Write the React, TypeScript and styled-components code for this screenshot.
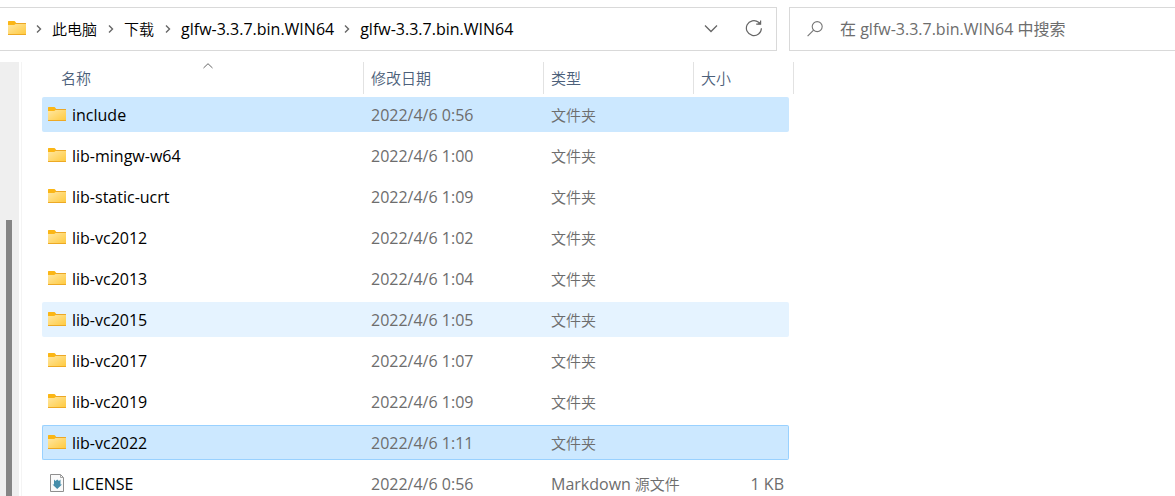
import React from "react";
import styled, { createGlobalStyle } from "styled-components";

const GlobalStyle = createGlobalStyle`
  * { box-sizing: border-box; }
  body {
    margin: 0;
    background: #fff;
    color: #000;
    font: 16px/20px "Open Sans", "Noto Sans CJK SC", sans-serif;
    overflow: hidden;
  }
  button, input { font: inherit; color: inherit; }
  svg { display: block; flex: none; }
`;

const Window = styled.div`
  display: flex;
  flex-direction: column;
  gap: 11px;
  height: 100vh;
  padding-top: 7px;
  overflow: hidden;
`;

const Toolbar = styled.header`
  display: flex;
  flex: none;
  gap: 12px;
`;

const AddressBar = styled.div`
  display: flex;
  align-items: center;
  flex: 1;
  min-width: 0;
  height: 44px;
  padding: 0 8px;
  border: 1px solid #d9d9d9;
  border-left: 0;
`;

const Crumbs = styled.nav`
  display: flex;
  align-items: center;
  flex: 1;
  min-width: 0;
  white-space: nowrap;
`;

const Crumb = styled.a<{ $cjk?: boolean }>`
  padding-right: ${(p) => (p.$cjk ? 1 : 0)}px;
  color: #000;
  font-size: ${(p) => (p.$cjk ? 15 : 16)}px;
  font-weight: ${(p) => (p.$cjk ? 350 : 400)};
  text-decoration: none;
`;

const Slot = styled.span`
  display: flex;
  justify-content: center;
  width: 26px;
`;

const IconButton = styled.button`
  display: grid;
  place-items: center;
  width: 28px;
  height: 32px;
  padding: 0;
  border: 0;
  background: none;
  color: #666;
  & + & { margin-left: 15px; }
`;

const SearchBox = styled.label`
  display: flex;
  align-items: center;
  gap: 17px;
  width: 386px;
  height: 44px;
  padding-left: 17px;
  border: 1px solid #d9d9d9;
  border-right: 0;
`;

const SearchInput = styled.input`
  flex: 1;
  min-width: 0;
  padding: 0;
  border: 0;
  outline: 0;
  background: none;
  &::placeholder { color: #6d6d6d; opacity: 1; }
`;

const Body = styled.div`
  display: flex;
  flex: 1;
  min-height: 0;
`;

const ScrollTrack = styled.div`
  display: flex;
  flex: none;
  width: 19px;
  padding: 158px 7px 0 6px;
  background: #efefef;
`;

const ScrollThumb = styled.div`
  flex: 1;
  background: #858585;
`;

const ListPane = styled.main`
  flex: 1;
  min-width: 0;
  margin-left: 2px;
  padding-left: 20px;
  border-left: 1px solid #f4f4f4;
  overflow: hidden;
`;

const FileTable = styled.table`
  width: 752px;
  table-layout: fixed;
  border-collapse: separate;
  border-spacing: 0;
`;

const HeadCell = styled.th<{ $width: number }>`
  width: ${(p) => p.$width}px;
  height: 32px;
  padding: 0;
  border-right: 1px solid #e2e2e2;
  font-weight: 400;
`;

const SortButton = styled.button<{ $first?: boolean }>`
  position: relative;
  display: block;
  width: ${(p) => (p.$first ? "calc(100% - 10px)" : "100%")};
  height: 32px;
  margin-left: ${(p) => (p.$first ? 10 : 0)}px;
  padding: 0 0 0 ${(p) => (p.$first ? 9 : 7)}px;
  border: 0;
  background: none;
  color: #4c607a;
  font-size: 15px;
  font-weight: 350;
  text-align: left;
`;

const SortMark = styled.svg`
  position: absolute;
  top: 1px;
  left: 50%;
  transform: translateX(-50%);
`;

type RowState = "plain" | "hover" | "selected" | "focused";

const fills: Record<RowState, string> = {
  plain: "transparent",
  hover: "#e5f3ff",
  selected: "#cce8ff",
  focused: "#cce8ff",
};

const Row = styled.tr<{ $state: RowState }>`
  --fill: ${(p) => fills[p.$state]};
  --edge: ${(p) => (p.$state === "focused" ? "#99d1ff" : "transparent")};
`;

const Cell = styled.td`
  padding: 3px 0;
  color: #6d6d6d;
`;

const CellBox = styled.div`
  display: flex;
  align-items: center;
  gap: 4px;
  height: 35px;
  padding: 0 7px;
  border: solid var(--edge);
  border-width: 1px 0;
  background: var(--fill);
  white-space: nowrap;
`;

const Han = styled.span`
  font-size: 15px;
  font-weight: 350;
`;

const NameBox = styled(CellBox)`
  gap: 6px;
  padding: 0 5px;
  border-left-width: 1px;
  border-radius: 2px 0 0 2px;
  color: #000;
`;

const SizeBox = styled(CellBox)`
  justify-content: flex-end;
  margin-right: 5px;
  padding: 0 4px;
  border-right-width: 1px;
  border-radius: 0 2px 2px 0;
`;

const FolderIcon = () => (
  <svg width="18" height="16" viewBox="0 0 18 16" aria-hidden="true">
    <defs>
      <linearGradient id="folder" x1="0" y1="0" x2="1" y2="1">
        <stop offset="0" stopColor="#ffe7a2" />
        <stop offset="1" stopColor="#ffc93c" />
      </linearGradient>
    </defs>
    <path d="M0 .6Q0 0 .6 0H6.2Q6.6 0 6.9 .3L8.2 2H17.4Q18 2 18 2.6V6H0Z" fill="#fbb615" />
    <path d="M8 2H17.4Q18 2 18 2.6V3H7.5Z" fill="#eba728" />
    <path d="M0 4H6.2L7.6 3H18V13.4Q18 14 17.4 14H.6Q0 14 0 13.4Z" fill="url(#folder)" />
    <path d="M0 13H18V13.4Q18 14 17.4 14H.6Q0 14 0 13.4Z" fill="#eda924" />
  </svg>
);

const FileIcon = () => (
  <svg width="18" height="20" viewBox="0 0 18 20" aria-hidden="true">
    <path d="M2.5 .5H12.5L15.5 3.5V17.5H2.5Z" fill="#fafafa" stroke="#8f8f8f" />
    <path d="M12.5 .5V3.5H15.5" fill="none" stroke="#a5a5a5" />
    <path d="M6 5.5L7.5 7L9.2 5.5L11 7L12.5 5.5V10.5H14L9.2 15L4.5 10.5H6Z" fill="#458daa" />
  </svg>
);

const Chevron = () => (
  <Slot aria-hidden="true">
    <svg width="6" height="10" viewBox="0 0 6 10">
      <path d="M1 1.5L4.5 5L1 8.5" fill="none" stroke="#666" strokeWidth="1.4" />
    </svg>
  </Slot>
);

const crumbs = [
  { label: "此电脑", cjk: true },
  { label: "下载", cjk: true },
  { label: "glfw-3.3.7.bin.WIN64", cjk: false },
  { label: "glfw-3.3.7.bin.WIN64", cjk: false },
];

const columns = [
  { label: "名称", width: 322 },
  { label: "修改日期", width: 180 },
  { label: "类型", width: 150 },
  { label: "大小", width: 100 },
];

interface Entry {
  name: string;
  time: string;
  state?: RowState;
  markdown?: boolean;
  size?: string;
}

const entries: Entry[] = [
  { name: "include", time: "0:56", state: "selected" },
  { name: "lib-mingw-w64", time: "1:00" },
  { name: "lib-static-ucrt", time: "1:09" },
  { name: "lib-vc2012", time: "1:02" },
  { name: "lib-vc2013", time: "1:04" },
  { name: "lib-vc2015", time: "1:05", state: "hover" },
  { name: "lib-vc2017", time: "1:07" },
  { name: "lib-vc2019", time: "1:09" },
  { name: "lib-vc2022", time: "1:11", state: "focused" },
  { name: "LICENSE", time: "0:56", markdown: true, size: "1 KB" },
];

export default function App() {
  return (
    <>
      <GlobalStyle />
      <Window>
        <Toolbar>
          <AddressBar>
            <Crumbs aria-label="路径">
              <FolderIcon />
              {crumbs.map((c, i) => (
                <React.Fragment key={i}>
                  <Chevron />
                  <Crumb href="#" $cjk={c.cjk}>{c.label}</Crumb>
                </React.Fragment>
              ))}
            </Crumbs>
            <IconButton aria-label="历史记录">
              <svg width="14" height="8" viewBox="0 0 14 8">
                <path d="M1 .5L7 6.5L13 .5" fill="none" stroke="currentColor" strokeWidth="1.3" />
              </svg>
            </IconButton>
            <IconButton aria-label="刷新">
              <svg width="18" height="18" viewBox="0 0 18 18" fill="none" stroke="currentColor" strokeWidth="1.2">
                <path d="M16.4 8.2A7.5 7.5 0 1 1 13.6 2.3L15 3.6" />
                <path d="M15.6 .4V4.2H11.2" />
                <path d="M15.6 1.2V4.2H12.4Z" fill="currentColor" stroke="none" />
              </svg>
            </IconButton>
          </AddressBar>
          <SearchBox>
            <svg width="16" height="16" viewBox="0 0 16 16" fill="none" stroke="#777" strokeWidth="1.1" aria-hidden="true">
              <circle cx="10.2" cy="5.6" r="5" />
              <path d="M6.6 9.2L.6 15.2" />
            </svg>
            <SearchInput type="text" aria-label="搜索" placeholder="在 glfw-3.3.7.bin.WIN64 中搜索" />
          </SearchBox>
        </Toolbar>
        <Body>
          <ScrollTrack>
            <ScrollThumb />
          </ScrollTrack>
          <ListPane>
            <FileTable>
              <thead>
                <tr>
                  {columns.map((c, i) => (
                    <HeadCell key={c.label} $width={c.width} scope="col">
                      <SortButton $first={i === 0}>
                        {i === 0 && (
                          <SortMark width="10" height="6" viewBox="0 0 10 6" aria-hidden="true">
                            <path d="M.5 5L5 .7L9.5 5" fill="none" stroke="#666" />
                          </SortMark>
                        )}
                        {c.label}
                      </SortButton>
                    </HeadCell>
                  ))}
                </tr>
              </thead>
              <tbody>
                {entries.map((e) => (
                  <Row key={e.name} $state={e.state ?? "plain"}>
                    <Cell>
                      <NameBox>
                        {e.markdown ? <FileIcon /> : <FolderIcon />}
                        {e.name}
                      </NameBox>
                    </Cell>
                    <Cell><CellBox>2022/4/6 {e.time}</CellBox></Cell>
                    <Cell>
                      <CellBox>
                        {e.markdown ? <>Markdown <Han>源文件</Han></> : <Han>文件夹</Han>}
                      </CellBox>
                    </Cell>
                    <Cell><SizeBox>{e.size}</SizeBox></Cell>
                  </Row>
                ))}
              </tbody>
            </FileTable>
          </ListPane>
        </Body>
      </Window>
    </>
  );
}
